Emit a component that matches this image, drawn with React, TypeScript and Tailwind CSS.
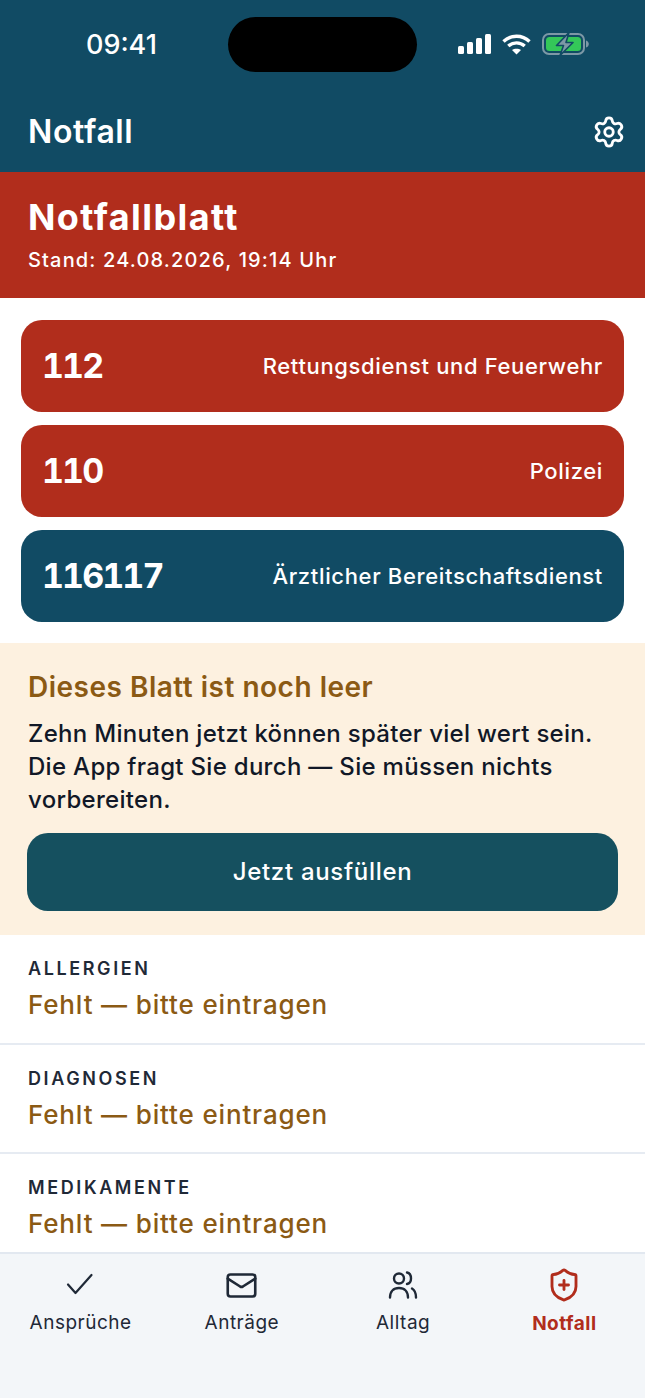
import React from "react";
import { Mail, ShieldPlus, Settings } from "lucide-react";

const hotlines = [
  { num: "112", label: "Rettungsdienst und Feuerwehr", bg: "bg-[#b12d1c]" },
  { num: "110", label: "Polizei", bg: "bg-[#b12d1c]" },
  { num: "116117", label: "Ärztlicher Bereitschaftsdienst", bg: "bg-[#114b64]" },
];

const fields = ["ALLERGIEN", "DIAGNOSEN", "MEDIKAMENTE"];

const CheckIcon = () => (
  <svg width="36" height="36" viewBox="0 0 36 36" fill="none" stroke="currentColor" strokeWidth="2.2" strokeLinecap="round" strokeLinejoin="round">
    <path d="M5 17.500L12.500 26L28.500 8" />
  </svg>
);

const MailIcon = () => <Mail size={33} strokeWidth={1.9} />;

const UsersIcon = () => (
  <svg width="36" height="36" viewBox="0 0 36 36" fill="none" stroke="currentColor" strokeWidth="2.4" strokeLinecap="round" strokeLinejoin="round">
    <circle cx="14" cy="11.500" r="5" />
    <path d="M5 30.500c0-6 3.500-9.500 9-9.500s9 3.500 9 9.500" />
    <path d="M22 5.500c2.500.5 4 3 4 6s-1.500 5-4 5.500" />
    <path d="M27 21.500c2.500 1.500 4 4.500 4 9" />
  </svg>
);

const ShieldIcon = () => <ShieldPlus size={36} strokeWidth={1.9} />;

const tabs = [
  { label: "Ansprüche", icon: CheckIcon },
  { label: "Anträge", icon: MailIcon },
  { label: "Alltag", icon: UsersIcon },
  { label: "Notfall", icon: ShieldIcon, active: true },
];

const StatusIcons = () => (
  <div className="flex items-center gap-[11px]">
    <svg width="33" height="20" viewBox="0 0 33 20" fill="white">
      <rect x="0" y="12" width="6" height="8" rx="1.5" />
      <rect x="9" y="8" width="6" height="12" rx="1.5" />
      <rect x="18" y="4" width="6" height="16" rx="1.5" />
      <rect x="27" y="0" width="6" height="20" rx="1.5" />
    </svg>
    <svg width="29" height="21" viewBox="0 0 29 21" fill="none" stroke="white" strokeWidth="3.4">
      <path d="M1.500 7.500C8.800 0.500 20.200 0.500 27.500 7.500" />
      <path d="M6.300 12C11 7.800 18 7.800 22.700 12" />
      <path d="M14.500 20.500L10 16C12.300 14.200 16.700 14.200 19 16Z" fill="white" stroke="none" />
    </svg>
    <svg width="47" height="24" viewBox="0 0 47 24" fill="none">
      <rect x="1" y="2" width="41" height="20" rx="6" stroke="#7d98a6" strokeWidth="2" />
      <rect x="4" y="5" width="35" height="14" rx="3.500" fill="#34c759" />
      <path d="M44 8.500c1.800.5 2.800 2 2.800 3.500s-1 3-2.800 3.500Z" fill="#7d98a6" />
      <path d="M27 0.500L14.500 13.500H21.500L18 23.500L31 10.500H24Z" fill="#7d98a6" stroke="#114b64" strokeWidth="1.600" strokeLinejoin="round" />
    </svg>
  </div>
);

export default function App() {
  return (
    <div className="relative flex h-[1398px] w-[645px] flex-col overflow-hidden bg-white font-['Inter',sans-serif]">
      {/* Header */}
      <header className="flex h-[172px] shrink-0 flex-col bg-[#114b64] text-white">
        <div className="flex h-[88px] items-center justify-between pl-[86px] pr-[56px]">
          <span className="text-[27px] font-medium leading-none">09:41</span>
          <StatusIcons />
        </div>
        <div className="flex flex-1 items-center justify-between pl-[28px] pr-[19px] pt-[4px]">
          <span className="text-[32px] font-semibold leading-none tracking-[0.6px]">Notfall</span>
          <Settings size={34} strokeWidth={2} />
        </div>
      </header>
      <div className="absolute left-[228px] top-[17px] h-[55px] w-[189px] rounded-full bg-black" />

      {/* Title */}
      <section className="flex h-[126px] shrink-0 flex-col bg-[#b12d1c] px-[28px] pt-[24px] text-white">
        <h1 className="text-[36px] font-bold leading-[42px] tracking-[1.4px]">Notfallblatt</h1>
        <p className="mt-[10px] text-[20px] font-medium leading-[24px] tracking-[1.150px]">Stand: 24.08.2026, 19:14 Uhr</p>
      </section>

      {/* Hotlines */}
      <section className="flex shrink-0 flex-col gap-[13px] px-[21px] pb-[21px] pt-[22px]">
        {hotlines.map((h) => (
          <div key={h.num} className={`flex h-[92px] items-center justify-between rounded-[21px] px-[21px] text-white ${h.bg}`}>
            <span className="text-[34px] font-bold tabular-nums leading-none tracking-[-1.9px]">{h.num}</span>
            <span className="text-[22px] font-medium tracking-[0.65px]">{h.label}</span>
          </div>
        ))}
      </section>

      {/* Empty notice */}
      <section className="h-[292px] shrink-0 bg-[#fdf1e0] px-[27px] pt-[26px]">
        <h2 className="pl-[1px] text-[28px] font-semibold leading-[36px] tracking-[0.5px] text-[#8b5a14]">Dieses Blatt ist noch leer</h2>
        <p className="mt-[12px] pl-[1px] text-[24px] font-medium leading-[33px] tracking-[0.3px] text-[#111827]">
          Zehn Minuten jetzt können später viel wert sein. Die App fragt Sie durch — Sie müssen nichts vorbereiten.
        </p>
        <button className="mt-[17px] flex h-[78px] w-full items-center justify-center rounded-[21px] bg-[#15505f] text-[24px] font-medium tracking-[0.7px] text-white">
          Jetzt ausfüllen
        </button>
      </section>

      {/* Fields */}
      <section className="min-h-0 flex-1 overflow-hidden">
        {fields.map((f) => (
          <div key={f} className="h-[109.500px] border-b-2 border-[#e6ebf2] px-[28px] pt-[22px]">
            <div className="text-[18px] font-semibold leading-[23px] tracking-[2.6px] text-[#1f2937]">{f}</div>
            <div className="mt-[8px] text-[26px] font-medium leading-[33px] tracking-[0.85px] text-[#8b5a14]">Fehlt — bitte eintragen</div>
          </div>
        ))}
      </section>

      {/* Tab bar */}
      <nav className="grid h-[146px] shrink-0 grid-cols-4 border-t-2 border-[#e2e8f0] bg-[#f3f6f9] pt-[13px]">
        {tabs.map((t) => {
          const Icon = t.icon;
          return (
            <div key={t.label} className={`flex flex-col items-center ${t.active ? "text-[#b12d1c]" : "text-[#1f2937]"}`}>
              <div className="flex h-[36px] items-center justify-center">
                <Icon />
              </div>
              <span className={`text-[19px] leading-[24px] tracking-[0.5px] ${t.active ? "mt-[9px] font-bold" : "mt-[8px] font-normal"}`}>{t.label}</span>
            </div>
          );
        })}
      </nav>
    </div>
  );
}
